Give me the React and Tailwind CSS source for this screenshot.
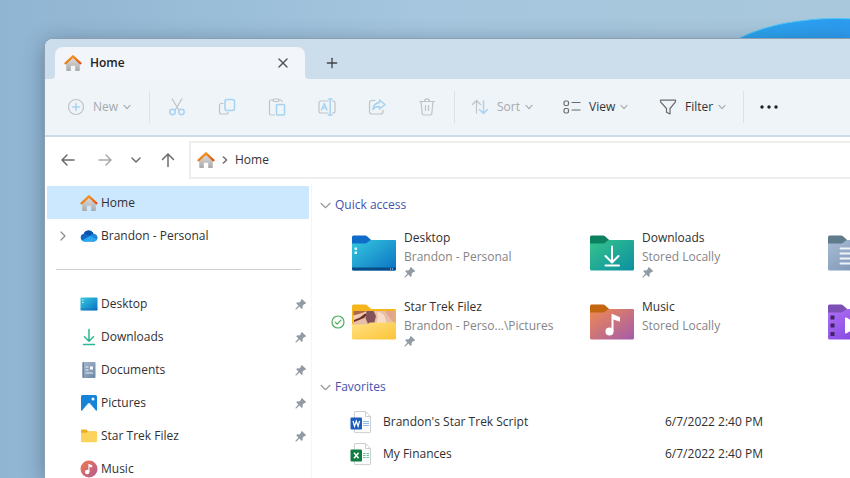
import { Plus, X } from 'lucide-react';

const quickAccess = [
  { name: 'Desktop', location: 'Brandon - Personal', kind: 'desktop', pinned: true },
  { name: 'Downloads', location: 'Stored Locally', kind: 'downloads', pinned: true },
  { name: 'Documents', kind: 'documents' },
  { name: 'Star Trek Filez', location: 'Brandon - Perso...\\Pictures', kind: 'photos', pinned: true, synced: true },
  { name: 'Music', location: 'Stored Locally', kind: 'music' },
  { name: 'Videos', kind: 'videos' },
];

const favorites = [
  { name: "Brandon's Star Trek Script", date: '6/7/2022 2:40 PM', Icon: WordIcon },
  { name: 'My Finances', date: '6/7/2022 2:40 PM', Icon: ExcelIcon },
];

const places = [
  { name: 'Desktop', Icon: DesktopIcon, pinned: true },
  { name: 'Downloads', Icon: DownloadsIcon, pinned: true },
  { name: 'Documents', Icon: DocumentsIcon, pinned: true },
  { name: 'Pictures', Icon: PicturesIcon, pinned: true },
  { name: 'Star Trek Filez', Icon: SmallFolderIcon, pinned: true },
  { name: 'Music', Icon: MusicIcon },
];

/* ---------- small icons ---------- */

function Chevron({ size = 8, right, strokeWidth = 1.2, className = '' }) {
  return (
    <svg
      width={size}
      height={size}
      viewBox={`0 0 ${size} ${size}`}
      fill="none"
      stroke="currentColor"
      strokeWidth={strokeWidth}
      strokeLinecap="round"
      strokeLinejoin="round"
      className={`shrink-0 ${className}`}
      aria-hidden="true"
    >
      <path
        d={
          right
            ? `M${size * 0.3} 1 L${size * 0.7} ${size / 2} L${size * 0.3} ${size - 1}`
            : `M1 ${size * 0.3} L${size / 2} ${size * 0.7} L${size - 1} ${size * 0.3}`
        }
      />
    </svg>
  );
}

function HomeIcon() {
  return (
    <svg width="18" height="18" viewBox="0 0 18 18" className="shrink-0" aria-hidden="true">
      <defs>
        <linearGradient id="homeWall" x1="0" y1="0" x2="0" y2="1">
          <stop offset="0" stopColor="#dedede" />
          <stop offset="1" stopColor="#a9a9ab" />
        </linearGradient>
        <linearGradient id="homeRoof" x1="0" y1="0" x2="1" y2="1">
          <stop offset="0" stopColor="#f5a623" />
          <stop offset="1" stopColor="#e0571b" />
        </linearGradient>
      </defs>
      <path d="M9 3.200 15.800 9.600V16a1 1 0 0 1-1 1H11.200v-5.200H6.800V17H3.200a1 1 0 0 1-1-1V9.600z" fill="url(#homeWall)" />
      <path d="M1.500 9.300 9 2.300l7.500 7" fill="none" stroke="url(#homeRoof)" strokeWidth="2.300" strokeLinecap="round" strokeLinejoin="round" />
    </svg>
  );
}

function CloudIcon() {
  return (
    <svg width="18" height="18" viewBox="0 0 18 18" className="shrink-0" aria-hidden="true">
      <path d="M4.300 14.500a3.900 3.900 0 0 1-.5-7.700A5.300 5.300 0 0 1 13.600 7a3.800 3.800 0 0 1 .5 7.500z" fill="#1068c4" />
      <path d="M3.800 6.800A5.300 5.300 0 0 1 13.600 7c-2 0-2.800.9-3.800 1.900L6.300 7.200z" fill="#0a54ad" />
      <path d="m2 13.600 7.800-4.700c1-.9 2-1.900 3.800-1.900a3.800 3.800 0 0 1 3.700 5z" fill="#1b86dd" />
      <path d="M1.800 13.500 9.900 9.100l7.200 3.300a3.700 3.700 0 0 1-3 2.100H4.300a3.800 3.800 0 0 1-2.500-1z" fill="#2ba6f1" />
    </svg>
  );
}

function DesktopIcon() {
  return (
    <svg width="18" height="18" viewBox="0 0 18 18" className="shrink-0" aria-hidden="true">
      <defs>
        <linearGradient id="desk" x1="0" y1="0" x2="1" y2="1">
          <stop offset="0" stopColor="#36cbe0" />
          <stop offset="1" stopColor="#0a6fc4" />
        </linearGradient>
      </defs>
      <rect x="0.500" y="2.500" width="17" height="13" rx="1" fill="url(#desk)" />
      <path d="M2 5h1.500M2 7.500h1.500" stroke="#c9f4fa" />
      <path d="M0.500 13.500h17v1a1 1 0 0 1-1 1h-15a1 1 0 0 1-1-1z" fill="#0f5fa8" opacity=".3" />
    </svg>
  );
}

function DownloadsIcon() {
  return (
    <svg width="18" height="18" viewBox="0 0 18 18" className="shrink-0" fill="none" stroke="#2bb894" strokeWidth="1.500" strokeLinecap="round" strokeLinejoin="round" aria-hidden="true">
      <path d="M9 1.500V13M4.500 8.700 9 13.200l4.500-4.500M3.500 16.500h11" />
    </svg>
  );
}

function DocumentsIcon() {
  return (
    <svg width="18" height="18" viewBox="0 0 18 18" className="shrink-0" aria-hidden="true">
      <defs>
        <linearGradient id="docs" x1="0" y1="0" x2="1" y2="1">
          <stop offset="0" stopColor="#a8b9cf" />
          <stop offset="1" stopColor="#6d86a6" />
        </linearGradient>
      </defs>
      <rect x="2.500" y="1" width="13" height="16" rx="1" fill="url(#docs)" />
      <path d="M2.500 2a1 1 0 0 1 1-1H4v16h-.5a1 1 0 0 1-1-1z" fill="#6b84a5" />
      <path d="M5.500 6h3M5.500 9h3M5.500 12h7.500" stroke="#e6edf5" strokeWidth="1.200" />
      <rect x="10" y="5.500" width="3" height="3" fill="#fff" />
    </svg>
  );
}

function PicturesIcon() {
  return (
    <svg width="18" height="18" viewBox="0 0 18 18" className="shrink-0" aria-hidden="true">
      <rect x="1" y="1" width="16" height="16" rx="1.500" fill="#1583d8" />
      <path d="M2 16.400 8.100 9.500q.9-.9 1.800 0l6.100 6.900q-.4.600-1 .6H3q-.6 0-1-.6z" fill="#fff" />
      <circle cx="13" cy="5" r="1.500" fill="#fff" />
    </svg>
  );
}

function SmallFolderIcon() {
  return (
    <svg width="18" height="18" viewBox="0 0 18 18" className="shrink-0" aria-hidden="true">
      <path d="M1 3.500a1 1 0 0 1 1-1h4.500L8.300 4.500H16a1 1 0 0 1 1 1V8H1z" fill="#eeae1d" />
      <path d="M1 5.800h5.500L8.200 4.500H16a1 1 0 0 1 1 1v8.700a1 1 0 0 1-1 1H2a1 1 0 0 1-1-1z" fill="#fcd45c" />
    </svg>
  );
}

function MusicIcon() {
  return (
    <svg width="18" height="18" viewBox="0 0 18 18" className="shrink-0" aria-hidden="true">
      <defs>
        <linearGradient id="tune" x1="0" y1="0" x2="1" y2="1">
          <stop offset="0" stopColor="#ef7a4d" />
          <stop offset="1" stopColor="#b25a96" />
        </linearGradient>
      </defs>
      <circle cx="9" cy="9" r="8.500" fill="url(#tune)" />
      <circle cx="7.200" cy="12" r="2.200" fill="#fff" />
      <path d="M8.400 12V3.700l3.800 1.500v2.400L9.500 6.700V12z" fill="#fff" />
    </svg>
  );
}

function Pin() {
  return (
    <svg width="12" height="12" viewBox="0 0 12 12" className="shrink-0" fill="#929ba4" aria-hidden="true">
      <path d="M6.900.9 11.100 5.100 10 6.200l-.7-.2-1.700 1.800.1 2.100-1 1L4.400 8.600 1.300 11.500.5 11.500.5 10.700 3.400 7.600 1.200 5.300l1-1 2.100.1L6.100 2.700l-.2-.8z" />
    </svg>
  );
}

function SyncedIcon() {
  return (
    <svg width="14" height="14" viewBox="0 0 14 14" fill="none" stroke="#4cae5c" strokeWidth="1.200" strokeLinecap="round" strokeLinejoin="round" aria-label="Synced">
      <circle cx="7" cy="7" r="6" />
      <path d="m4.200 7.200 2 2 3.700-4" />
    </svg>
  );
}

function FilePage({ children }) {
  return (
    <svg width="22" height="24" viewBox="0 0 22 24" aria-hidden="true">
      <path d="M5 1.500h10.500l5 5V22a.6.600 0 0 1-.6.600H5a.6.600 0 0 1-.6-.6V2a.6.600 0 0 1 .6-.5z" fill="#fdfdfd" stroke="#cfcfcf" />
      <path d="M15.500 1.500v5h5" fill="none" stroke="#cfcfcf" />
      {children}
    </svg>
  );
}

function WordIcon() {
  return (
    <FilePage>
      <path d="M13 11.500h6M13 13.500h6M13 15.500h6" stroke="#8bbcf0" strokeWidth="1.200" />
      <rect x="0.500" y="7.500" width="11.500" height="12" rx="1" fill="#1b5dbe" />
      <path d="m3 10.800 1.500 5.400 1.800-5 1.800 5 1.500-5.400" fill="none" stroke="#fff" strokeWidth="1.300" />
    </FilePage>
  );
}

function ExcelIcon() {
  return (
    <FilePage>
      <path d="M13 11.500h2.500M16.500 11.500H19M13 13.500h2.500M16.500 13.500H19M13 15.500h2.500M16.500 15.500H19" stroke="#6cc391" strokeWidth="1.200" />
      <rect x="0.500" y="7.500" width="11.500" height="12" rx="1" fill="#107c41" />
      <path d="m4 10.700 4.600 5.600M8.600 10.700 4 16.300" fill="none" stroke="#fff" strokeWidth="1.500" />
    </FilePage>
  );
}

/* ---------- big folders ---------- */

const folderColors = {
  desktop: { tab: '#0f6cc9', from: '#35c8df', to: '#0b72c3' },
  downloads: { tab: '#0d8060', from: '#35c48b', to: '#0c8fa2' },
  documents: { tab: '#5f7c8c', from: '#a8bbd3', to: '#768fb2' },
  photos: { tab: '#f5b51b', from: '#ffe184', to: '#fbc437' },
  music: { tab: '#c4650f', from: '#f08a50', to: '#a45bab' },
  videos: { tab: '#7c50b4', from: '#b070f5', to: '#7a3fdc' },
};

function FolderArt({ kind }) {
  if (kind === 'desktop') {
    return (
      <>
        <path d="M0 32.500h44V34a1.500 1.500 0 0 1-1.500 1.500h-41A1.500 1.500 0 0 1 0 34z" fill="#0a4a86" />
        <path d="M2.500 12.500h2.500v2.500H2.500zM2.500 16.500h2.500V19H2.500z" fill="#d8f6fb" />
        <path d="M38 34h4" stroke="#cfe6f6" strokeDasharray="1 1" />
      </>
    );
  }
  if (kind === 'downloads') {
    return <path d="M22 11.500v15.500M15.500 21l6.500 6.500 6.500-6.500M15.500 30.500h13.500" fill="none" stroke="#fff" strokeWidth="2" strokeLinecap="round" strokeLinejoin="round" />;
  }
  if (kind === 'documents') {
    return <path d="M12.500 13.500h19M12.500 18.500h19M12.500 23.500h19M12.500 28.500h19" fill="none" stroke="#eef3f9" strokeWidth="2" strokeLinecap="round" />;
  }
  if (kind === 'music') {
    return (
      <g fill="#fff">
        <circle cx="19.500" cy="27.500" r="4" />
        <path d="M21.500 10.500a.7.700 0 0 1 1-.6l7 3.100a1 1 0 0 1 .5.900V17a.6.600 0 0 1-.8.500l-5.700-2v12h-2z" />
      </g>
    );
  }
  if (kind === 'videos') {
    return (
      <>
        <path d="M2.500 11.500h4v4h-4zM2.500 19.500h4v4h-4zM2.500 28h4v4h-4z" fill="#3e2567" />
        <path d="M17 14.500v14a1 1 0 0 0 1.500.8l11.500-7a1 1 0 0 0 0-1.700l-11.500-7a1 1 0 0 0-1.500.9z" fill="#fff" />
      </>
    );
  }
  // snapshot peeking out behind the folder front
  return (
    <>
      <rect x="1.500" y="7" width="41" height="14" fill="#e9bea6" />
      <path d="M1.500 7H15l-5 2.500-8.500 2z" fill="#b0684a" />
      <path d="M1.500 11.500 9 9.500l5-2 1 2.500-4 3-9.500 4z" fill="#efc9b4" />
      <path d="M2 16 8 13.500 13 9.500l2 1-3 3.500-5 2-5 2z" fill="#6d2f23" />
      <path d="M14.500 7h7l2.500 5-2 8h-6l-2.500-6z" fill="#84535a" />
      <path d="M25 8q6 0 8 5.500l2 7H24l2-7z" fill="#f6dccb" />
      <path d="M33 7h9.500v12l-4-4z" fill="#dfa58e" />
      <path d="M0 20.500h13.500q1.500 0 2.500-.8l1.500-.9q.7-.3 1.500-.3H42.500A1.500 1.500 0 0 1 44 20V34a1.500 1.500 0 0 1-1.500 1.500h-41A1.500 1.500 0 0 1 0 34z" fill="url(#folder-photos)" />
    </>
  );
}

function Folder({ kind }) {
  const { tab, from, to } = folderColors[kind];
  return (
    <svg width="44" height="36" viewBox="0 0 44 36" className="shrink-0" aria-hidden="true">
      <defs>
        <linearGradient id={`folder-${kind}`} x1="0" y1="0" x2="1" y2="1">
          <stop offset="0" stopColor={from} />
          <stop offset="1" stopColor={to} />
        </linearGradient>
      </defs>
      <path d="M0 2A1.500 1.500 0 0 1 1.500.5H13.200q1 0 1.800.7l3.600 3.300q.6.500 1.400.5h22.500A1.500 1.500 0 0 1 44 6.500V20.500H0z" fill={tab} />
      {kind !== 'photos' && (
        <path d="M0 8.500h13q1.400 0 2.400-.9l2.200-1.900q.8-.7 1.900-.7h23A1.500 1.500 0 0 1 44 6.500V34a1.500 1.500 0 0 1-1.500 1.500h-41A1.500 1.500 0 0 1 0 34z" fill={`url(#folder-${kind})`} />
      )}
      <FolderArt kind={kind} />
    </svg>
  );
}

/* ---------- toolbar ---------- */

const GRAY = '#bfc3c7';
const BLUE = '#a6d3ef';

function ToolIcon({ children }) {
  return (
    <svg width="18" height="18" viewBox="0 0 18 18" fill="none" stroke={GRAY} strokeWidth="1.200" strokeLinecap="round" strokeLinejoin="round" className="shrink-0" aria-hidden="true">
      {children}
    </svg>
  );
}

const iconActions = [
  {
    label: 'Cut',
    icon: (
      <ToolIcon>
        <path d="m4.200 1 6.500 10.800M13.800 1 7.300 11.800" />
        <g stroke={BLUE} strokeWidth="1.500">
          <circle cx="4.500" cy="14" r="2.700" />
          <circle cx="13.500" cy="14" r="2.700" />
        </g>
      </ToolIcon>
    ),
  },
  {
    label: 'Copy',
    icon: (
      <ToolIcon>
        <path d="M5 5.500H3.500a2 2 0 0 0-2 2V14a2 2 0 0 0 2 2h4.500a2 2 0 0 0 2-1.500" />
        <rect x="7" y="1.500" width="9.500" height="11" rx="2" stroke={BLUE} strokeWidth="1.500" />
      </ToolIcon>
    ),
  },
  {
    label: 'Paste',
    icon: (
      <ToolIcon>
        <path d="M5 2H3a1.500 1.500 0 0 0-1.500 1.500v12A1.500 1.500 0 0 0 3 17h3.500M11 2h1.500A1.500 1.500 0 0 1 14 3.500" />
        <rect x="5" y="1" width="6" height="2.500" rx="1.200" />
        <rect x="8.500" y="6.500" width="8" height="10.500" rx="1" stroke={BLUE} strokeWidth="1.500" />
      </ToolIcon>
    ),
  },
  {
    label: 'Rename',
    icon: (
      <ToolIcon>
        <path d="M10 3H3a2 2 0 0 0-2 2v8a2 2 0 0 0 2 2h7M14.500 3h.5a2 2 0 0 1 2 2v8a2 2 0 0 1-2 2h-.5" />
        <path d="M10.500 1h3.500M10.500 17h3.500M12.200 1v16M3.500 12 6.300 5.500 9 12M4.500 10h3.700" stroke={BLUE} strokeWidth="1.500" />
      </ToolIcon>
    ),
  },
  {
    label: 'Share',
    icon: (
      <ToolIcon>
        <path d="M7 2.500H4a2.500 2.500 0 0 0-2.500 2.500v8.500A2.500 2.500 0 0 0 4 16h8.500a2.500 2.500 0 0 0 2.500-2.500V12" />
        <path d="M11.500 2 17 6.500 11.500 11V8.500Q7 8.300 4.800 11.500 5.500 5.300 11.500 4.500z" stroke={BLUE} strokeWidth="1.500" />
      </ToolIcon>
    ),
  },
  {
    label: 'Delete',
    icon: (
      <ToolIcon>
        <path d="M1.500 3.500h15M6.500 3.300a2.500 2.500 0 0 1 5 0M3 3.500l1.200 12A1.500 1.500 0 0 0 5.700 17h6.600a1.500 1.500 0 0 0 1.500-1.500L15 3.500M7.500 7.500v5M10.500 7.500v5" />
      </ToolIcon>
    ),
  },
];

function MenuButton({ label, icon, disabled, className }) {
  return (
    <button type="button" disabled={disabled} className={`flex items-center font-medium ${disabled ? 'text-[#a5a9ad]' : 'text-[#333]'} ${className}`}>
      {icon}
      <span className="ml-2">{label}</span>
      <Chevron className="ml-[5px] text-[#a9adb1]" />
    </button>
  );
}

function Separator() {
  return <div className="w-px h-8 bg-[#dce1e6]" />;
}

function Toolbar() {
  return (
    <div role="toolbar" className="flex items-center h-[58px] shrink-0 bg-[#eff4f9] border-b-2 border-[#cddbe9]">
      <MenuButton
        label="New"
        disabled
        className="w-[104px] pl-[22px]"
        icon={
          <ToolIcon>
            <circle cx="9" cy="9" r="7.500" />
            <path d="M9 5.500v7M5.500 9h7" stroke={BLUE} strokeWidth="1.500" />
          </ToolIcon>
        }
      />
      <Separator />
      <div className="flex px-[2px]">
        {iconActions.map((action) => (
          <button key={action.label} type="button" disabled aria-label={action.label} className="w-[50px] h-8 flex items-center justify-center">
            {action.icon}
          </button>
        ))}
      </div>
      <Separator />
      <MenuButton
        label="Sort"
        disabled
        className="w-[92px] pl-4"
        icon={
          <ToolIcon>
            <path d="M5.500 15V2.500M1.500 6.500l4-4 4 4" />
            <path d="M12.500 3v12.500M8.500 11.500l4 4 4-4" stroke={BLUE} strokeWidth="1.500" />
          </ToolIcon>
        }
      />
      <MenuButton
        label="View"
        className="w-[96px] pl-4"
        icon={
          <ToolIcon>
            <g stroke="#6a6a6a">
              <rect x="1" y="3" width="4.500" height="4.500" rx="1.500" />
              <rect x="1" y="10.500" width="4.500" height="4.500" rx="1.500" />
              <path d="M9 4.500h8M9 12h8" />
            </g>
          </ToolIcon>
        }
      />
      <MenuButton
        label="Filter"
        className="w-[100px] pl-4"
        icon={
          <ToolIcon>
            <path d="M1.500 2.200h15v1.600L11 10.500V16l-3.500-1.800v-3.700L1.500 3.800z" stroke="#6a6a6a" />
          </ToolIcon>
        }
      />
      <Separator />
      <button type="button" aria-label="See more" className="w-[50px] h-8 flex items-center justify-center">
        <svg width="18" height="4" viewBox="0 0 18 4" fill="#1f1f1f" aria-hidden="true">
          <circle cx="2" cy="2" r="1.700" />
          <circle cx="9" cy="2" r="1.700" />
          <circle cx="16" cy="2" r="1.700" />
        </svg>
      </button>
    </div>
  );
}

/* ---------- window parts ---------- */

function TabBar() {
  return (
    <div className="flex items-end h-10 shrink-0 pl-[10px] bg-[#ccdeec]">
      <div className="relative flex items-center w-[250px] h-8 pl-[9px] pr-[14px] rounded-t-lg bg-[#f2f5fa]">
        <HomeIcon />
        <span className="ml-2 font-semibold text-[#222]">Home</span>
        <button type="button" aria-label="Close tab" className="ml-auto text-[#555]">
          <X size={16} strokeWidth={2} />
        </button>
        <svg width="4" height="4" viewBox="0 0 4 4" className="absolute bottom-0 left-full" aria-hidden="true">
          <path d="M0 0v4h4a4 4 0 0 1-4-4z" fill="#f2f5fa" />
        </svg>
        <svg width="4" height="4" viewBox="0 0 4 4" className="absolute bottom-0 right-full" aria-hidden="true">
          <path d="M4 0v4H0a4 4 0 0 0 4-4z" fill="#f2f5fa" />
        </svg>
      </div>
      <button type="button" aria-label="New tab" className="ml-[19px] h-8 text-[#444]">
        <Plus size={16} strokeWidth={2} />
      </button>
    </div>
  );
}

function Arrow({ d }) {
  return (
    <svg width="16" height="16" viewBox="0 0 16 16" fill="none" stroke="currentColor" strokeWidth="1.500" strokeLinecap="round" strokeLinejoin="round" aria-hidden="true">
      <path d={d} />
    </svg>
  );
}

function AddressRow() {
  return (
    <div className="flex items-center h-[46px] shrink-0 pl-[15px] text-[#6c6c6c]">
      <button type="button" aria-label="Back" className="w-[37px]">
        <Arrow d="M14 8H2M7 3 2 8l5 5" />
      </button>
      <button type="button" aria-label="Forward" disabled className="w-[34px] text-[#a9a9a9]">
        <Arrow d="M2 8h12M9 3l5 5-5 5" />
      </button>
      <button type="button" aria-label="Recent locations" className="w-[29px]">
        <Chevron size={10} strokeWidth={1.5} />
      </button>
      <button type="button" aria-label="Up" className="w-[29px]">
        <Arrow d="M8 14.500V2M2.500 7.500 8 2l5.500 5.500" />
      </button>
      <nav aria-label="Address" className="flex flex-1 items-center h-[38px] pl-[6px] border-2 border-r-0 border-[#f0eeed]">
        <HomeIcon />
        <Chevron right size={8} strokeWidth={1.5} className="mx-[6px]" />
        <a href="#home" className="text-[#333]">Home</a>
      </nav>
    </div>
  );
}

function Sidebar() {
  return (
    <nav aria-label="Folders" className="w-[267px] shrink-0 px-[2px] pt-[3px] border-r border-[#f3f6f9]">
      <a href="#home" aria-current="page" className="flex items-center h-[33px] pl-[33px] bg-[#cce8ff]">
        <HomeIcon />
        <span className="ml-[3px]">Home</span>
      </a>
      <a href="#onedrive" className="flex items-center h-[34px] pl-[11px]">
        <Chevron right size={10} className="mr-3 text-[#8c8c8c]" />
        <CloudIcon />
        <span className="ml-[3px]">Brandon - Personal</span>
      </a>
      <hr className="mt-4 mb-[17px] ml-[9px] mr-2 border-[#d0d0d0]" />
      {places.map(({ name, Icon, pinned }) => (
        <a key={name} href="#place" className="flex items-center h-[33px] pl-[33px] pr-[2px]">
          <Icon />
          <span className="ml-[3px]">{name}</span>
          {pinned && (
            <span className="ml-auto">
              <Pin />
            </span>
          )}
        </a>
      ))}
    </nav>
  );
}

function SectionTitle({ children }) {
  return (
    <h2 className="text-[#4552b0]">
      <button type="button" className="flex items-center h-5">
        <Chevron size={11} className="mr-1 text-[#9a9a9a]" />
        {children}
      </button>
    </h2>
  );
}

function FolderTile({ folder }) {
  return (
    <a href="#folder" aria-label={folder.name} className="flex items-start h-[69px]">
      <span className="flex items-center w-[21px] h-9 shrink-0 mt-[7px]">{folder.synced && <SyncedIcon />}</span>
      <span className="mt-[7px]">
        <Folder kind={folder.kind} />
      </span>
      {folder.location && (
        <span className="ml-2 whitespace-nowrap leading-[19px]">
          <span className="block">{folder.name}</span>
          <span className="block text-[#858585]">{folder.location}</span>
          {folder.pinned && <Pin />}
        </span>
      )}
    </a>
  );
}

function Content() {
  return (
    <main className="flex-1 min-w-0 pt-3 pl-2 overflow-hidden">
      <SectionTitle>Quick access</SectionTitle>
      <div className="grid grid-cols-[repeat(3,238px)] mt-[13px] pl-[11px]">
        {quickAccess.map((folder) => (
          <FolderTile key={folder.name} folder={folder} />
        ))}
      </div>
      <div className="mt-[11px]">
        <SectionTitle>Favorites</SectionTitle>
      </div>
      <table className="mt-[9px] ml-[30px]">
        <tbody>
          {favorites.map(({ name, date, Icon }) => (
            <tr key={name} className="h-8">
              <td className="w-[33px] p-0">
                <Icon />
              </td>
              <td className="w-[282px] p-0">{name}</td>
              <td className="p-0 whitespace-nowrap">{date}</td>
            </tr>
          ))}
        </tbody>
      </table>
    </main>
  );
}

export default function App() {
  return (
    <div className="relative h-screen overflow-hidden flex flex-col pt-[39px] pl-[45px] bg-linear-to-r from-[#90b5d2] via-[#a5c6de] to-[#a9c8dc] font-['Open_Sans','Noto_Sans',sans-serif] text-[12px] leading-[18px] text-[#303030]">
      {/* wallpaper bloom */}
      <div className="absolute top-[18px] -right-[116px] w-[260px] h-[120px] rounded-[50%] bg-linear-to-r from-[#2aa9f0] to-[#2f8fee] border-t border-[#4cc4f8]" />
      <div className="relative flex flex-col flex-1 min-h-0 rounded-tl-lg overflow-hidden bg-white shadow-[0_0_0_1px_#8c9fb1,0_4px_22px_rgba(30,50,75,0.45)]">
        <TabBar />
        <Toolbar />
        <AddressRow />
        <div className="flex flex-1 min-h-0">
          <Sidebar />
          <Content />
        </div>
      </div>
    </div>
  );
}
